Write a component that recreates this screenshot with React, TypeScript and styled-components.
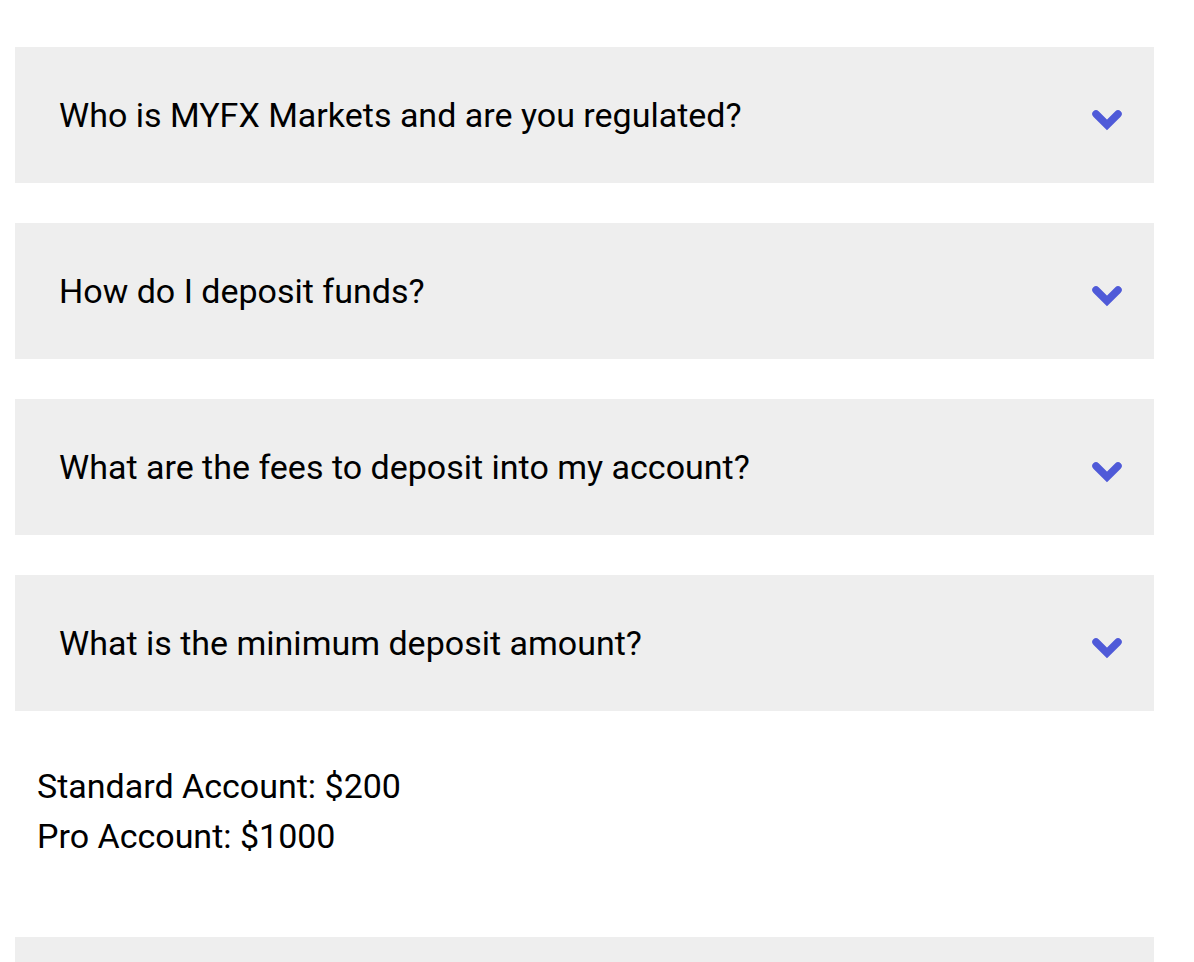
import React, { useState } from 'react';
import styled, { createGlobalStyle } from 'styled-components';

const GlobalStyle = createGlobalStyle`
  body {
    margin: 0;
    background: #ffffff;
    font-family: Roboto, "Liberation Sans", Arial, sans-serif;
    color: #000000;
  }
`;

const Wrapper = styled.div`
  display: flex;
  flex-direction: column;
  gap: 40px;
  padding: 47px 40px 0 15px;
`;

const Item = styled.div`
  display: flex;
  flex-direction: column;
`;

const Question = styled.button`
  display: flex;
  align-items: center;
  justify-content: space-between;
  width: 100%;
  height: 136px;
  padding: 0 32px 0 44px;
  box-sizing: border-box;
  border: none;
  background-color: #eeeeee;
  font-family: inherit;
  font-size: 34px;
  color: #000000;
  text-align: left;
  cursor: pointer;
`;

const Chevron = styled.svg`
  width: 30px;
  height: 21px;
  margin-top: 11px;
  flex-shrink: 0;
`;

const Answer = styled.div`
  padding: 50px 22px 36px;
  font-size: 34px;
  line-height: 50px;
`;

const faqs = [
  { q: 'Who is MYFX Markets and are you regulated?', a: [] as string[] },
  { q: 'How do I deposit funds?', a: [] as string[] },
  { q: 'What are the fees to deposit into my account?', a: [] as string[] },
  {
    q: 'What is the minimum deposit amount?',
    a: ['Standard Account: $200', 'Pro Account: $1000'],
  },
  { q: 'How long does it take for my deposit to appear?', a: [] as string[] },
];

const App: React.FC = () => {
  const [open, setOpen] = useState<number>(3);

  return (
    <>
      <GlobalStyle />
      <Wrapper>
        {faqs.map((item, i) => (
          <Item key={item.q}>
            <Question onClick={() => setOpen(open === i ? -1 : i)}>
              <span>{item.q}</span>
              <Chevron viewBox="0 0 30 21">
                <polyline
                  points="4,4 15,15 26,4"
                  fill="none"
                  stroke="#4f5ad8"
                  strokeWidth="7.5"
                  strokeLinecap="round"
                  strokeLinejoin="miter"
                />
              </Chevron>
            </Question>
            {open === i && item.a.length > 0 && (
              <Answer>
                {item.a.map((line) => (
                  <div key={line}>{line}</div>
                ))}
              </Answer>
            )}
          </Item>
        ))}
      </Wrapper>
    </>
  );
};

export default App;
